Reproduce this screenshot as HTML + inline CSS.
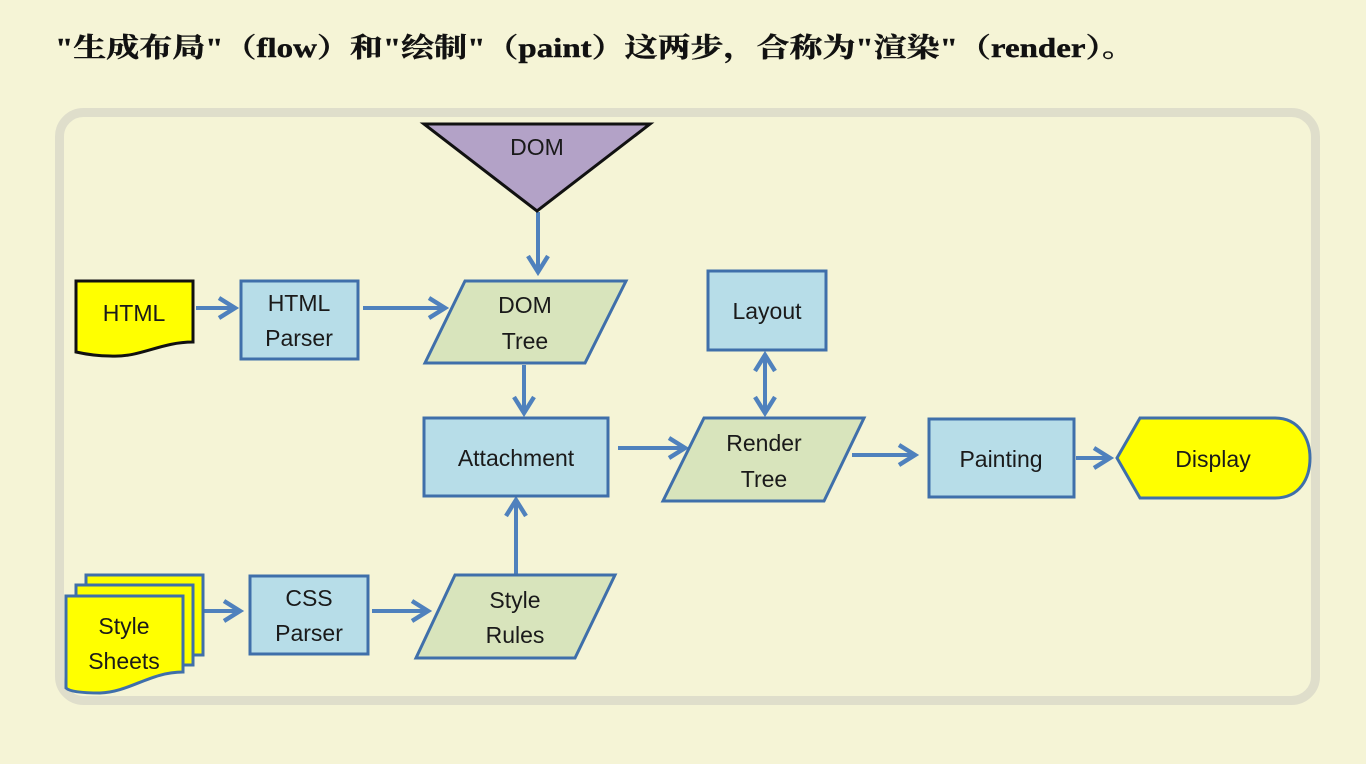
<!DOCTYPE html>
<html><head><meta charset="utf-8"><style>
html,body{margin:0;padding:0;background:#f5f4d6;width:1366px;height:764px;overflow:hidden}
svg{display:block}
.t{font-family:"Liberation Sans",sans-serif;font-size:23px;fill:#1a1a1a;text-anchor:middle}
</style></head><body>
<svg width="1366" height="764" viewBox="0 0 1366 764">
<defs><marker id="a" markerWidth="6" markerHeight="6" refX="4.5" refY="3" orient="auto" markerUnits="strokeWidth"><path d="M0.5,0.5 L4.5,3 L0.5,5.5" fill="none" stroke="#4f81bd" stroke-width="1.1"/></marker>
<marker id="b" markerWidth="6" markerHeight="6" refX="4.5" refY="3" orient="auto-start-reverse" markerUnits="strokeWidth"><path d="M0.5,0.5 L4.5,3 L0.5,5.5" fill="none" stroke="#4f81bd" stroke-width="1.1"/></marker></defs>
<text x="55" y="57" textLength="1080" lengthAdjust="spacingAndGlyphs" style="font-family:'Liberation Serif','Noto Serif CJK SC',serif;font-weight:bold;font-size:27px;fill:#111;stroke:#111;stroke-width:0.4">"生成布局"（flow）和"绘制"（paint）这两步，合称为"渲染"（render）。</text>
<rect x="59.5" y="112.5" width="1256" height="588" rx="24" fill="#f5f4d6" stroke="#dfdecb" stroke-width="9"/>
<g stroke="#4f81bd" stroke-width="4" fill="none" marker-end="url(#a)">
<line x1="538" y1="212" x2="538" y2="272"/>
<line x1="196" y1="308" x2="235" y2="308"/>
<line x1="363" y1="308" x2="445" y2="308"/>
<line x1="524" y1="365" x2="524" y2="413"/>
<line x1="618" y1="448" x2="685" y2="448"/>
<line x1="852" y1="455" x2="915" y2="455"/>
<line x1="1076" y1="458" x2="1110" y2="458"/>
<line x1="203" y1="611" x2="240" y2="611"/>
<line x1="372" y1="611" x2="428" y2="611"/>
<line x1="516" y1="575" x2="516" y2="500"/>
<line x1="765" y1="413" x2="765" y2="355" marker-start="url(#b)"/>
</g>
<path d="M424,124 L650,124 L537,211 Z" fill="#b3a2c7" stroke="#111" stroke-width="3"/>
<text class="t" x="537" y="155">DOM</text>
<path d="M76,281 L193,281 L193,342 C160,342 140,358 110,356 C95,356 85,354 76,352 Z" fill="#ffff00" stroke="#111" stroke-width="3"/>
<text class="t" x="134" y="321">HTML</text>
<g fill="#b7dde8" stroke="#3f6faa" stroke-width="3">
<rect x="241" y="281" width="117" height="78"/>
<rect x="708" y="271" width="118" height="79"/>
<rect x="424" y="418" width="184" height="78"/>
<rect x="929" y="419" width="145" height="78"/>
<rect x="250" y="576" width="118" height="78"/>
</g>
<g fill="#d8e4bc" stroke="#3f6faa" stroke-width="3">
<path d="M465,281 L626,281 L585,363 L425,363 Z"/>
<path d="M704,418 L864,418 L824,501 L663,501 Z"/>
<path d="M455,575 L615,575 L575,658 L416,658 Z"/>
</g>
<path d="M1140,418 L1275,418 C1300,418 1310,440 1310,458 C1310,478 1300,498 1275,498 L1140,498 L1117,458 Z" fill="#ffff00" stroke="#3f6faa" stroke-width="3"/>
<g fill="#ffff00" stroke="#3f6faa" stroke-width="3">
<rect x="86" y="575" width="117" height="80"/>
<rect x="76" y="585" width="117" height="80"/>
<path d="M66,596 L183,596 L183,672 C150,672 130,692 100,693 C85,693 70,692 66,688 Z"/>
</g>
<g class="t">
<text class="t" x="299" y="311">HTML</text><text class="t" x="299" y="346">Parser</text>
<text class="t" x="525" y="313">DOM</text><text class="t" x="525" y="349">Tree</text>
<text class="t" x="767" y="319">Layout</text>
<text class="t" x="516" y="466">Attachment</text>
<text class="t" x="764" y="451">Render</text><text class="t" x="764" y="487">Tree</text>
<text class="t" x="1001" y="467">Painting</text>
<text class="t" x="1213" y="467">Display</text>
<text class="t" x="309" y="606">CSS</text><text class="t" x="309" y="641">Parser</text>
<text class="t" x="515" y="608">Style</text><text class="t" x="515" y="643">Rules</text>
<text class="t" x="124" y="634">Style</text><text class="t" x="124" y="669">Sheets</text>
</g>
</svg>
</body></html>
